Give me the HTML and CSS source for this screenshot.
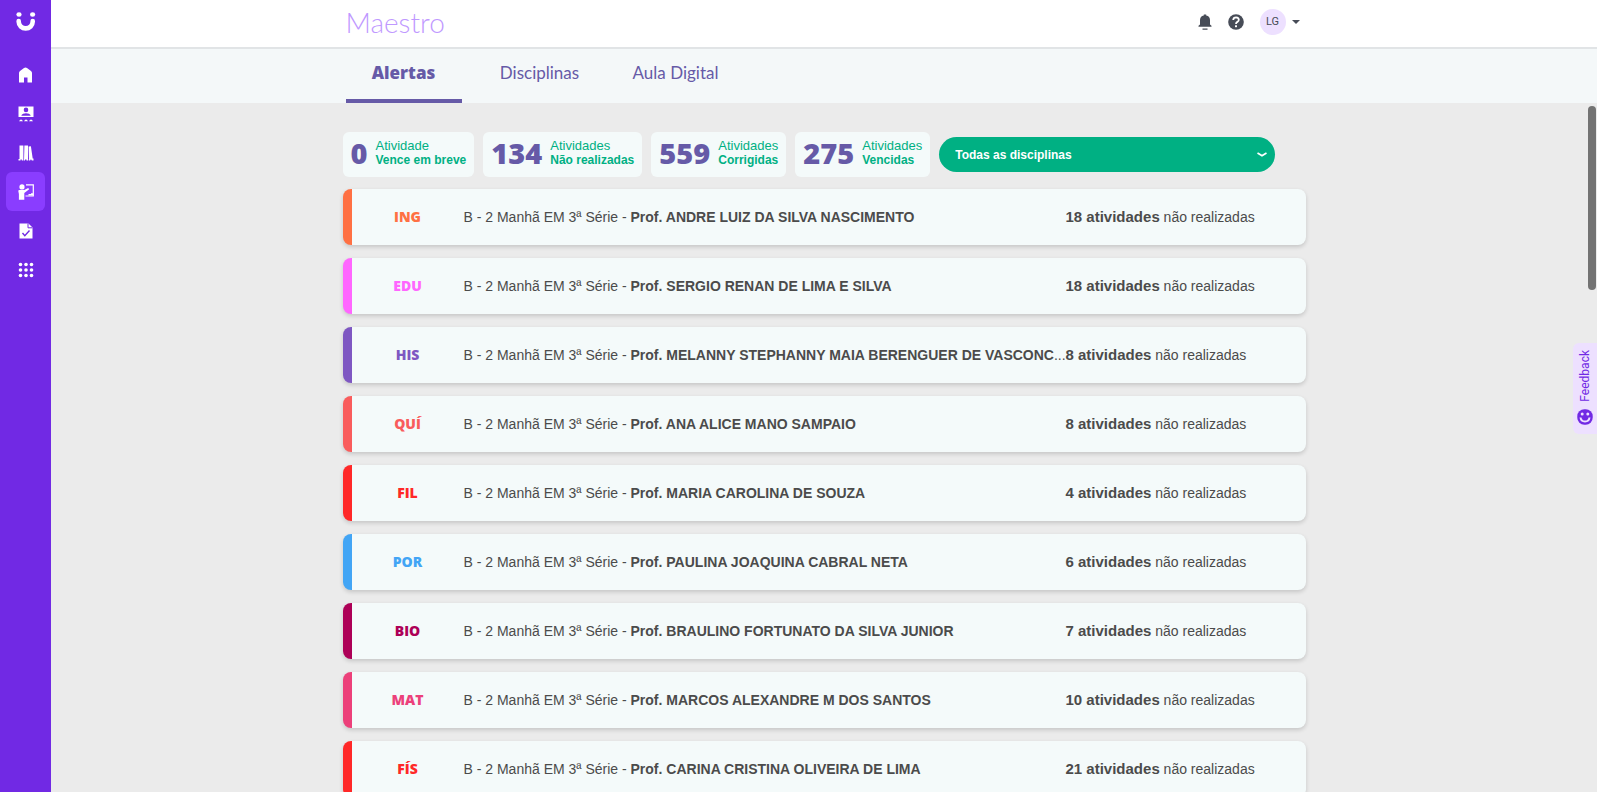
FILE: index.html
```html
<!DOCTYPE html>
<html lang="pt-BR">
<head>
<meta charset="utf-8">
<title>Maestro</title>
<link rel="stylesheet" href="styles.css">
</head>
<body>
<div class="app">
  <nav class="sidebar" aria-label="Principal">
    <a class="brand" href="#" aria-label="Início">
      <svg width="20" height="20" viewBox="0 0 20 20" fill="currentColor"><ellipse cx="3" cy="2.5" rx="2.6" ry="2.2"/><ellipse cx="16.6" cy="2.5" rx="2.6" ry="2.2"/><path d="M2.7 9v.8a7 6.6 0 0 0 14 0V9" fill="none" stroke="currentColor" stroke-width="4.6" stroke-linecap="round"/></svg>
    </a>
    <a class="side-link" href="#" aria-label="Casa">
      <svg width="15" height="16" viewBox="0 0 15 16" fill="currentColor"><path d="M1 15.500V6Q1 5 2 4L6 1Q7.500 0 9 1l4 3q1 1 1 2v9.500H9.500V10.500h-3.500v5z"/></svg>
    </a>
    <a class="side-link" href="#" aria-label="Turmas">
      <svg width="16" height="16" viewBox="0 0 16 16" fill="currentColor"><path fill-rule="evenodd" d="M.5.500h15v10.500H.5zM8 1.600a2.300 2.300 0 1 0 0 4.600a2.300 2.300 0 0 0 0-4.600zM3.500 9.800h9V8.900Q11.500 7.200 8 7.200T3.500 8.900z"/><path d="M1 15.200q2-3.200 4 0zM6 15.200q2-3.200 4 0zM11 15.200q2-3.200 4 0z"/></svg>
    </a>
    <a class="side-link" href="#" aria-label="Biblioteca">
      <svg width="16" height="16" viewBox="0 0 16 16" fill="currentColor"><path d="M1.500.500h3.900v15H3.800v-1H2.500v1H.5v-1.500h1zM6.400.500h3.600v13.500h.2v1.500H8.500v-1H7v1H6zM10.600 1.500l2.300-.3 1.800 12.300h.8v1.900h-1.700l-.6-.8-.9.200v.6h-1.300z"/></svg>
    </a>
    <a class="side-link side-link-active" href="#" aria-label="Maestro" aria-current="page">
      <svg width="16" height="16" viewBox="0 0 16 16" fill="currentColor"><circle cx="4" cy="2.900" r="2.600"/><path d="M.3 7q0-1 1-1h5L10.200 3.900l1 1.400L6.300 9v6.700H.9V10z"/><path d="M8 .9h7.300V12H7.500" fill="none" stroke="currentColor" stroke-width="1.200"/><path d="M10.500 11.500h4.500V9.300h-2v.8h-2.500z"/></svg>
    </a>
    <a class="side-link" href="#" aria-label="Tarefas">
      <svg width="14" height="16" viewBox="0 0 14 16"><path d="M.5.500h9L13.500 4.500v11H.5z" fill="currentColor"/><path d="M9 .5v4.300h4.500" fill="none" stroke="#7129e4" stroke-width="1"/><path d="M3.500 10l2.300 2.600L10.500 7.500" fill="none" stroke="#7129e4" stroke-width="1.400"/></svg>
    </a>
    <a class="side-link" href="#" aria-label="Mais aplicativos">
      <svg width="16" height="16" viewBox="0 0 16 16" fill="currentColor"><circle cx="2.500" cy="2.500" r="1.800"/><circle cx="8" cy="2.500" r="1.800"/><circle cx="13.500" cy="2.500" r="1.800"/><circle cx="2.500" cy="8" r="1.800"/><circle cx="8" cy="8" r="1.800"/><circle cx="13.500" cy="8" r="1.800"/><circle cx="2.500" cy="13.500" r="1.800"/><circle cx="8" cy="13.500" r="1.800"/><circle cx="13.500" cy="13.500" r="1.800"/></svg>
    </a>
  </nav>

  <div class="page">
    <header class="topbar">
      <div class="wrap topbar-inner">
        <div class="title">Maestro</div>
        <div class="tools">
          <button class="tool" type="button" aria-label="Notificações">
            <svg width="14" height="16" viewBox="0 0 14 16" fill="currentColor"><path d="M.5 12.800v-1L2 10.500V6q0-3.800 3.800-4.600V.5h2.400v.9Q12 2.200 12 6v4.500l1.500 1.300v1zM4.500 14.500h5v1.200h-5z"/></svg>
          </button>
          <button class="tool" type="button" aria-label="Ajuda">
            <svg width="16" height="16" viewBox="0 0 16 16"><circle cx="8" cy="8" r="7.800" fill="currentColor"/><path d="M5.200 6q.2-2.600 2.900-2.600 2.700.1 2.700 2.400 0 1.200-1.400 2.100Q8 8.700 8 10" fill="none" stroke="#fff" stroke-width="1.800"/><rect x="7" y="11.300" width="2" height="1.900" fill="#fff"/></svg>
          </button>
          <button class="account" type="button" aria-label="Conta">
            <span class="avatar">LG</span>
            <svg width="8" height="4" viewBox="0 0 8 4" fill="currentColor"><path d="M0 0h8L4 4z"/></svg>
          </button>
        </div>
      </div>
    </header>

    <nav class="tabs" aria-label="Seções">
      <div class="wrap tabs-inner">
        <a class="tab tab-active" href="#" aria-current="page">Alertas</a>
        <a class="tab" href="#">Disciplinas</a>
        <a class="tab" href="#">Aula Digital</a>
      </div>
    </nav>

    <main class="content">
      <div class="wrap">
        <div class="summary">
          <div class="stat"><span class="stat-number">0</span><p class="stat-text">Atividade<b>Vence em breve</b></p></div>
          <div class="stat"><span class="stat-number">134</span><p class="stat-text">Atividades<b>Não realizadas</b></p></div>
          <div class="stat"><span class="stat-number">559</span><p class="stat-text">Atividades<b>Corrigidas</b></p></div>
          <div class="stat"><span class="stat-number">275</span><p class="stat-text">Atividades<b>Vencidas</b></p></div>
          <div class="filter">
            <select class="filter-select" aria-label="Disciplina"><option>Todas as disciplinas</option></select>
            <svg class="filter-arrow" width="10" height="5" viewBox="0 0 10 5" fill="none" stroke="currentColor" stroke-width="1.700"><path d="M.5 1l2.500 1.500L5 3.700 7 2.500 9.500 1"/></svg>
          </div>
        </div>
        <ul class="alerts">
          <li class="alert ing"><span class="subject">ING</span><p class="teacher">B - 2 Manhã EM 3ª Série - <b>Prof. ANDRE LUIZ DA SILVA NASCIMENTO</b></p><p class="count"><b>18 atividades</b> não realizadas</p></li>
          <li class="alert edu"><span class="subject">EDU</span><p class="teacher">B - 2 Manhã EM 3ª Série - <b>Prof. SERGIO RENAN DE LIMA E SILVA</b></p><p class="count"><b>18 atividades</b> não realizadas</p></li>
          <li class="alert his"><span class="subject">HIS</span><p class="teacher">B - 2 Manhã EM 3ª Série - <b>Prof. MELANNY STEPHANNY MAIA BERENGUER DE VASCONC</b>...</p><p class="count"><b>8 atividades</b> não realizadas</p></li>
          <li class="alert qui"><span class="subject">QUÍ</span><p class="teacher">B - 2 Manhã EM 3ª Série - <b>Prof. ANA ALICE MANO SAMPAIO</b></p><p class="count"><b>8 atividades</b> não realizadas</p></li>
          <li class="alert fil"><span class="subject">FIL</span><p class="teacher">B - 2 Manhã EM 3ª Série - <b>Prof. MARIA CAROLINA DE SOUZA</b></p><p class="count"><b>4 atividades</b> não realizadas</p></li>
          <li class="alert por"><span class="subject">POR</span><p class="teacher">B - 2 Manhã EM 3ª Série - <b>Prof. PAULINA JOAQUINA CABRAL NETA</b></p><p class="count"><b>6 atividades</b> não realizadas</p></li>
          <li class="alert bio"><span class="subject">BIO</span><p class="teacher">B - 2 Manhã EM 3ª Série - <b>Prof. BRAULINO FORTUNATO DA SILVA JUNIOR</b></p><p class="count"><b>7 atividades</b> não realizadas</p></li>
          <li class="alert mat"><span class="subject">MAT</span><p class="teacher">B - 2 Manhã EM 3ª Série - <b>Prof. MARCOS ALEXANDRE M DOS SANTOS</b></p><p class="count"><b>10 atividades</b> não realizadas</p></li>
          <li class="alert fis"><span class="subject">FÍS</span><p class="teacher">B - 2 Manhã EM 3ª Série - <b>Prof. CARINA CRISTINA OLIVEIRA DE LIMA</b></p><p class="count"><b>21 atividades</b> não realizadas</p></li>
        </ul>
      </div>
    </main>
  </div>
</div>
<div class="scroll-thumb" aria-hidden="true"></div>
<button class="feedback" type="button">
  <span class="feedback-label">Feedback</span>
  <svg width="16" height="16" viewBox="0 0 16 16"><rect x=".3" y=".3" width="15.400" height="15.400" rx="7" fill="#7129e4"/><path d="M3.500 8.500q.5 4 4.500 4t4.500-4" fill="none" stroke="#ede0ff" stroke-width="2"/><circle cx="5.200" cy="5" r="1.500" fill="#ede0ff"/><circle cx="10.800" cy="5" r="1.500" fill="#ede0ff"/></svg>
</button>
</body>
</html>
```

FILE: styles.css
```css
* { box-sizing: border-box; }

body {
  margin: 0;
  background: #ebebeb;
  color: #4b4b4b;
  font-family: "Liberation Sans", Arial, sans-serif;
  font-size: 14px;
  line-height: 18px;
}

p, ul { margin: 0; padding: 0; }
a { color: inherit; text-decoration: none; }
button { border: 0; padding: 0; background: none; color: inherit; font: inherit; cursor: pointer; }
svg { display: block; flex: none; }

.app { display: flex; height: 100vh; overflow: hidden; }

.sidebar {
  display: flex;
  flex-direction: column;
  align-items: center;
  flex: none;
  width: 51px;
  background: #7129e4;
  color: #fff;
}
.brand { padding: 12px 0 23px; }
.side-link {
  display: flex;
  align-items: center;
  justify-content: center;
  width: 39px;
  height: 39px;
  border-radius: 6px;
}
.side-link-active { background: #8a3dff; }

.page { display: flex; flex-direction: column; flex: 1; min-width: 0; }
.wrap { width: 100%; max-width: 963px; margin: 0 auto; }

.topbar { flex: none; background: #fff; border-bottom: 2px solid #e1e4e6; }
.topbar-inner {
  display: flex;
  align-items: center;
  justify-content: space-between;
  height: 47px;
  padding: 0 6px 4px 3px;
}
.title {
  color: #bf99ff;
  font-family: Lato, sans-serif;
  font-size: 28px;
  font-weight: 300;
}
.tools { display: flex; align-items: center; gap: 16px; color: #474c57; }
.account { display: flex; align-items: center; gap: 6px; }
.avatar {
  display: flex;
  align-items: center;
  justify-content: center;
  width: 26px;
  height: 26px;
  border-radius: 50%;
  background: #ede0ff;
  font-family: Roboto, sans-serif;
  font-size: 11px;
}

.tabs { flex: none; background: #f4f8f9; }
.tabs-inner { display: flex; gap: 20px; padding-left: 3px; }
.tab {
  min-width: 116px;
  padding: 12px 0 15px;
  border-bottom: 4px solid transparent;
  color: #665aa7;
  font-family: Lato, sans-serif;
  font-size: 17px;
  line-height: 23px;
  text-align: center;
}
.tab-active { border-color: #665aa7; font-family: "Open Sans", sans-serif; font-weight: 800; }

.content { flex: 1; min-height: 0; padding-top: 29px; overflow: hidden; }

.summary { display: flex; align-items: center; gap: 9px; margin-bottom: 12px; }
.stat {
  display: flex;
  align-items: center;
  gap: 8px;
  height: 45px;
  padding: 0 8px 3px;
  border-radius: 6px;
  background: #f4fafa;
  white-space: nowrap;
}
.stat-number {
  color: #665aa7;
  font-family: "Open Sans", sans-serif;
  font-size: 29px;
  font-weight: 800;
}
.stat-text {
  color: #00b083;
  font-size: 13px;
  line-height: 14px;
}
.stat-text b { display: block; font-size: 12px; }

.filter { position: relative; width: 336px; color: #fff; }
.filter-select {
  appearance: none;
  display: block;
  width: 100%;
  height: 35px;
  padding: 0 32px 0 16px;
  border: 0;
  border-radius: 18px;
  background: #00b083;
  color: inherit;
  font: bold 12px "Liberation Sans", Arial, sans-serif;
}
.filter-arrow { position: absolute; top: 15px; right: 8px; pointer-events: none; }

.alerts { display: grid; gap: 13px; list-style: none; }
.alert {
  display: grid;
  grid-template-columns: 112px minmax(0, 1fr) 240px;
  align-items: center;
  padding: 19px 0;
  border-left: 9px solid var(--tone);
  border-radius: 8px;
  background: #f4fafa;
  box-shadow: 0 2px 4px rgba(0, 0, 0, 0.16);
}
.subject {
  color: var(--tone);
  font-family: "Open Sans", sans-serif;
  font-weight: 800;
  text-align: center;
}
.teacher, .count { white-space: nowrap; }
.count b { font-size: 15px; }

.ing { --tone: #ff7043; }
.edu { --tone: #ff66ff; }
.his { --tone: #7e57c2; }
.qui { --tone: #f95c5c; }
.fil { --tone: #ff2828; }
.por { --tone: #42a5f5; }
.bio { --tone: #ad0057; }
.mat { --tone: #ec407a; }
.fis { --tone: #ff2828; }

.scroll-thumb {
  position: fixed;
  top: 106px;
  right: 1px;
  width: 8px;
  height: 184px;
  border-radius: 4px;
  background: #737373;
}
.feedback {
  position: fixed;
  top: 343px;
  right: 0;
  display: flex;
  flex-direction: column;
  align-items: center;
  gap: 7px;
  padding: 7px 4px 9px;
  border-radius: 6px 0 0 6px;
  background: #ede0ff;
  color: #7129e4;
  font-family: Roboto, sans-serif;
  font-size: 12px;
  line-height: 15px;
}
.feedback-label { writing-mode: vertical-rl; transform: rotate(180deg); }
```
